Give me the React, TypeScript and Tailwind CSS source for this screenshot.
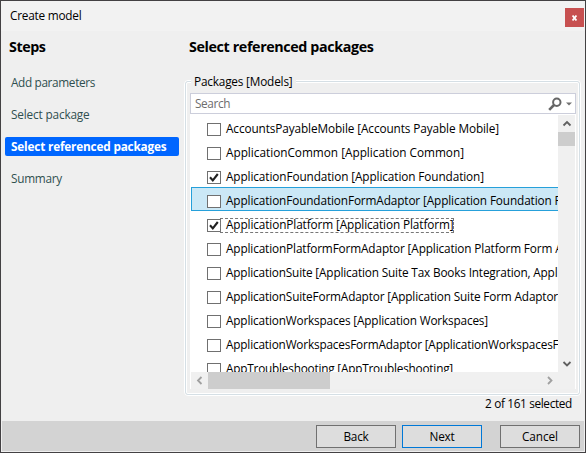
import { useLayoutEffect, useRef, useState } from "react";

type FitProps = { text: string; width: number; className?: string };

/** Single line of text whose tracking is adjusted to fill a given width. */
function Fit({ text, width, className = "" }: FitProps) {
  const ref = useRef<HTMLSpanElement>(null);
  const [spacing, setSpacing] = useState(0);
  useLayoutEffect(() => {
    if (!ref.current) return;
    const natural = ref.current.getBoundingClientRect().width - spacing * text.length;
    setSpacing((width - natural) / text.length);
  }, [text, width]);
  return (
    <span ref={ref} className={`inline-block whitespace-pre ${className}`} style={{ letterSpacing: `${spacing}px` }}>
      {text}
    </span>
  );
}

const steps = [
  { label: "Add parameters", width: 84 },
  { label: "Select package", width: 78.5 },
  { label: "Select referenced packages", width: 155.5, active: true },
  { label: "Summary", width: 51 },
];

type Row = { label: string; width: number; checked?: boolean; selected?: boolean; focused?: boolean };

const rows: Row[] = [
  { label: "AccountsPayableMobile [Accounts Payable Mobile]", width: 273 },
  { label: "ApplicationCommon [Application Common]", width: 238 },
  { label: "ApplicationFoundation [Application Foundation]", width: 258, checked: true },
  { label: "ApplicationFoundationFormAdaptor [Application Foundation F", width: 334.5, selected: true },
  { label: "ApplicationPlatform [Application Platform]", width: 227.5, checked: true, focused: true },
  { label: "ApplicationPlatformFormAdaptor [Application Platform Form A", width: 336.5 },
  { label: "ApplicationSuite [Application Suite Tax Books Integration, Appl", width: 331.5 },
  { label: "ApplicationSuiteFormAdaptor [Application Suite Form Adaptor", width: 332 },
  { label: "ApplicationWorkspaces [Application Workspaces]", width: 262 },
  { label: "ApplicationWorkspacesFormAdaptor [ApplicationWorkspacesF", width: 332.5 },
  { label: "AppTroubleshooting [AppTroubleshooting]", width: 227 },
];

function Chevron({ d, color }: { d: string; color: string }) {
  return (
    <svg width="17" height="17" viewBox="0 0 17 17" fill="none" stroke={color} strokeWidth="1.8">
      <path d={d} />
    </svg>
  );
}

function ListRow({ row }: { row: Row }) {
  return (
    <div
      className={`relative flex h-6 shrink-0 items-center pt-[5px] ${
        row.selected ? "bg-[#cbe8f6] shadow-[inset_1px_1px_#26a0da,inset_0_-1px_#26a0da]" : ""
      }`}
    >
      <div className="ml-4 flex h-[13px] w-[14px] shrink-0 items-center justify-center border border-[#707070] bg-white">
        {row.checked && (
          <svg width="12" height="11" viewBox="0 0 12 11" fill="none" stroke="#212121" strokeWidth="2.1">
            <path d="M2 5.3 L4.8 8.4 L9.8 2" />
          </svg>
        )}
      </div>
      <Fit text={row.label} width={row.width} className="mb-[3px] ml-[5px] leading-4" />
      {row.focused && (
        <div className="absolute top-[7px] left-[29px] h-[15px] w-[234px] border border-dashed border-[#777]" />
      )}
    </div>
  );
}

function DialogButton({ label, width, primary }: { label: string; width: number; primary?: boolean }) {
  return (
    <button
      className={`flex h-[23px] w-20 items-center justify-center border bg-[#dddddd] ${
        primary ? "border-[#0078d7]" : "border-[#707070]"
      }`}
    >
      <Fit text={label} width={width} className="mb-px leading-4" />
    </button>
  );
}

export default function App() {
  return (
    <div className="relative flex h-[453px] w-[586px] flex-col overflow-hidden border border-[#434143] bg-[#efefef] font-['Open_Sans','Noto_Sans',sans-serif] text-[11.8px] text-black">
      <header className="flex h-[30px] shrink-0 items-start justify-between bg-[#f2f2f2] pr-px pl-[9px]">
        <Fit text="Create model" width={71.5} className="mt-[6px] leading-4" />
        <button className="mt-[7px] flex h-[19px] w-[19px] items-center justify-center bg-[#c75050]">
          <svg width="5" height="6" viewBox="0 0 5 6" stroke="white" strokeWidth="1.8">
            <path d="M0.5 0.5 L4.5 5.5 M4.5 0.5 L0.5 5.5" />
          </svg>
        </button>
      </header>

      <main className="flex h-[390px] shrink-0">
        <nav className="w-[183px] shrink-0 pl-1">
          <h1 className="h-[38px] pt-[6px] pl-1 text-[14.3px] leading-5 font-bold">
            <Fit text="Steps" width={36.5} />
          </h1>
          <ul className="flex flex-col gap-[13px] pt-[4px]">
            {steps.map((s) => (
              <li
                key={s.label}
                className={`flex h-[19px] w-[174px] items-center rounded-[2px] pl-[6px] ${
                  s.active ? "bg-[#0066ff] font-bold text-white" : "text-[#2f4f4f]"
                }`}
              >
                <Fit text={s.label} width={s.width} className="mb-[2px] leading-4" />
              </li>
            ))}
          </ul>
        </nav>

        <section className="flex w-[400px] flex-col">
          <h2 className="h-[49px] shrink-0 pt-[6px] pl-[5px] text-[14.3px] leading-5 font-bold">
            <Fit text="Select referenced packages" width={184.5} />
          </h2>
          <div className="h-[316px] w-[397px] shrink-0 rounded-[4px] border border-white">
            <div className="h-full rounded-[3px] border border-[#d5dfe5]">
              <div className="flex h-full flex-col rounded-[2px] border border-white px-[3px]">
                <div className="h-[10px] shrink-0">
                  <div className="relative -top-[10px] ml-px w-[105px] bg-[#efefef] pl-[3px] leading-4">
                    <Fit text="Packages [Models]" width={98.5} />
                  </div>
                </div>
                <div className="flex h-[21px] w-[386px] shrink-0 items-center border border-[#cccedb] bg-white pl-1">
                  <Fit text="Search" width={35} className="mb-px leading-4 text-[#6d6d6d]" />
                  <svg className="ml-auto" width="14" height="14" viewBox="0 0 14 14" fill="none" stroke="#666666">
                    <circle cx="8.8" cy="5.2" r="3.7" strokeWidth="2" />
                    <path d="M6 8 L1.2 12.8" strokeWidth="2.6" />
                  </svg>
                  <svg className="mr-[3px] ml-1" width="6" height="4" viewBox="0 0 6 4" fill="#717171">
                    <path d="M0 0.5 H6 L3 3.5 Z" />
                  </svg>
                </div>
                <div className="h-[275px] w-[386px] shrink-0 border border-white bg-white">
                  <div className="flex h-[257px]">
                    <div className="flex w-[367px] shrink-0 flex-col overflow-hidden bg-white">
                      {rows.map((r) => (
                        <ListRow key={r.label} row={r} />
                      ))}
                    </div>
                    <div className="flex w-[17px] shrink-0 flex-col bg-[#f0f0f0]">
                      <Chevron d="M5.5 10.5 L9 7 L12.5 10.5" color="#606060" />
                      <div className="h-[14px] bg-[#cdcdcd]" />
                      <div className="mt-auto">
                        <Chevron d="M5.5 7 L9 10.5 L12.5 7" color="#606060" />
                      </div>
                    </div>
                  </div>
                  <div className="flex h-[17px] bg-[#f0f0f0]">
                    <Chevron d="M10.5 5 L7 8.5 L10.5 12" color="#a0a0a0" />
                    <div className="w-[122px] bg-[#cdcdcd]" />
                    <div className="mr-[17px] ml-auto">
                      <Chevron d="M7 5 L10.5 8.5 L7 12" color="#a0a0a0" />
                    </div>
                  </div>
                </div>
              </div>
            </div>
          </div>
          <div className="-mt-px flex justify-end pr-[12px]">
            <Fit text="2 of 161 selected" width={87} className="leading-4" />
          </div>
        </section>
      </main>

      <footer className="mx-px mt-auto mb-px flex h-[30px] shrink-0 bg-[#d3d3d3] pt-1 pl-[314px]">
        <DialogButton label="Back" width={25} />
        <div className="ml-[6px]">
          <DialogButton label="Next" width={25} primary />
        </div>
        <div className="ml-[18px]">
          <DialogButton label="Cancel" width={36} />
        </div>
      </footer>
      <div className="absolute top-[272px] -left-px h-[21px] w-px bg-[#2f6c9c]" />
      <div className="absolute top-[272px] -right-px h-[21px] w-px bg-[#2f6c9c]" />
    </div>
  );
}
